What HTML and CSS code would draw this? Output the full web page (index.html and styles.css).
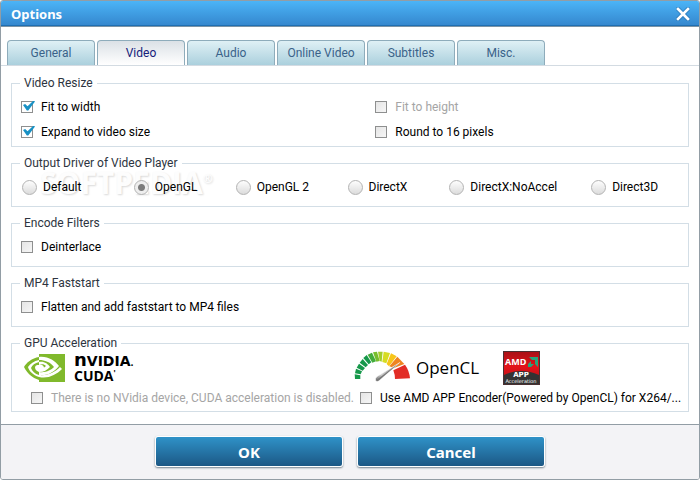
FILE: index.html
```html
<!DOCTYPE html>
<html lang="en">
<head>
<meta charset="utf-8">
<title>Options</title>
<link rel="stylesheet" href="styles.css">
</head>
<body>
<form class="window">
  <header class="titlebar">
    <h1>Options</h1>
    <button type="button" class="close" aria-label="Close">
      <svg width="14" height="14" viewBox="0 0 14 14"><path d="M2 2 12 12M12 2 2 12" stroke="#2469a4" stroke-width="4.6" stroke-linecap="square" opacity=".45"/><path d="M2 2 12 12M12 2 2 12" stroke="#fff" stroke-width="2.6" stroke-linecap="square"/></svg>
    </button>
  </header>
  <nav class="tabs">
    <button type="button" class="tab">General</button>
    <button type="button" class="tab active">Video</button>
    <button type="button" class="tab">Audio</button>
    <button type="button" class="tab">Online Video</button>
    <button type="button" class="tab">Subtitles</button>
    <button type="button" class="tab">Misc.</button>
  </nav>
  <main class="panel">
    <fieldset>
      <legend>Video Resize</legend>
      <div class="resize-grid">
        <label class="check"><input type="checkbox" checked>Fit to width</label>
        <label class="check disabled"><input type="checkbox" disabled>Fit to height</label>
        <label class="check"><input type="checkbox" checked>Expand to video size</label>
        <label class="check"><input type="checkbox">Round to 16 pixels</label>
      </div>
    </fieldset>
    <fieldset class="drivers">
      <legend>Output Driver of Video Player</legend>
      <span class="watermark" aria-hidden="true">SOFTPEDIA<sup>®</sup></span>
      <div class="driver-grid">
        <label class="radio"><input type="radio" name="driver">Default</label>
        <label class="radio"><input type="radio" name="driver" checked>OpenGL</label>
        <label class="radio"><input type="radio" name="driver">OpenGL 2</label>
        <label class="radio"><input type="radio" name="driver">DirectX</label>
        <label class="radio"><input type="radio" name="driver">DirectX:NoAccel</label>
        <label class="radio"><input type="radio" name="driver">Direct3D</label>
      </div>
    </fieldset>
    <fieldset>
      <legend>Encode Filters</legend>
      <div class="single"><label class="check"><input type="checkbox">Deinterlace</label></div>
    </fieldset>
    <fieldset>
      <legend>MP4 Faststart</legend>
      <div class="single"><label class="check"><input type="checkbox">Flatten and add faststart to MP4 files</label></div>
    </fieldset>
    <fieldset>
      <legend>GPU Acceleration</legend>
      <div class="gpu-grid">
        <div class="gpu nvidia">
          <div class="logos">
            <svg width="112" height="32" viewBox="0 0 112 32" role="img" aria-label="NVIDIA CUDA">
              <path d="M15 3H41V31H15Z" fill="#80b92c"/>
              <path d="M15 6C8 7 2 12 0 16C3 22 8 27 15 29V26C9 24 5 20 4 16C6 13 10 10 15 9Z" fill="#80b92c"/>
              <path d="M15 11C11 12 8 14 7 17C8 20 11 23 15 24V21C12 20 11 18 11 16C12 14 13 14 15 14Z" fill="#80b92c"/>
              <path d="M15 6C24 5 31 10 35 15C30 21 24 25 15 24V21C22 22 27 19 30 16C26 11 21 9 15 9Z" fill="#fff"/>
              <path d="M15 11C20 10 24 13 26 16C23 19 20 21 15 21L15 18C18 18 20 17 22 15C20 13 18 13 15 14Z" fill="#fff"/>
              <path d="M15 26C24 28 32 24 38 18L36 16C31 21 24 25 15 24Z" fill="#fff"/>
              <path d="M15 14C18 13 20 15 20 17C18 19 17 19 15 18Z" fill="#fff"/>
              <text class="nv" x="50" y="15"><tspan class="nv-n">n</tspan>VIDIA<tspan class="tiny">.</tspan></text>
              <text class="cuda" x="50" y="30">CUDA<tspan class="tiny" dy="-5">'</tspan></text>
            </svg>
          </div>
          <label class="check disabled"><input type="checkbox" disabled>There is no NVidia device, CUDA acceleration is disabled.</label>
        </div>
        <div class="gpu amd">
          <div class="logos">
            <svg width="57" height="32" viewBox="12 53 171 96" aria-hidden="true">
              <defs>
                <linearGradient id="needle" x1="0" y1="1" x2="1" y2="0"><stop offset="0" stop-color="#666"/><stop offset=".3" stop-color="#ccc"/><stop offset="1" stop-color="#888"/></linearGradient>
              </defs>
              <g fill="#16984a">
                <path d="M15 137 14 123 31 126 31 137Z"/><path d="M15 120 18 106 36 114 32 123Z"/>
                <path d="M20 103 27 91 45 104 38 112Z"/><path d="M29 88 38 77 54 95 47 102Z"/>
                <path d="M40 74 50 65 64 87 56 93Z"/>
              </g>
              <path d="M53 64 66 58 78 84 67 88Z" fill="#43ac3b"/>
              <path d="M69 57 81 55 89 83 79 85Z" fill="#78be2d"/>
              <path d="M84 55 98 55 95 85 89 83Z" fill="#a3cc2c"/>
              <path d="M101 55 120 59 109 90 97 86Z" fill="#d6dc23"/>
              <path d="M123 60 140 69 117 99 110 92Z" fill="#f7c519"/>
              <path d="M142 70 163 92 132 104 118 99Z" fill="#ef8421"/>
              <path d="M165 94Q178 112 180 135L135 137Q135 124 130 111Z" fill="#e22d26"/>
              <path d="M149 88 90 140Q81 148 76 141 75 134 82 129Z" fill="url(#needle)" stroke="#fff" stroke-width="2"/>
              <path d="M148 89 88 140Q82 145 78 141Z" fill="#777"/>
            </svg>
            <span class="opencl">OpenCL</span>
            <svg width="37" height="34" viewBox="0 0 37 34" role="img" aria-label="AMD APP Acceleration">
              <defs><linearGradient id="red" x1="0" y1="0" x2="0" y2="1"><stop offset="0" stop-color="#a91116"/><stop offset=".45" stop-color="#e3131a"/><stop offset="1" stop-color="#b30f14"/></linearGradient></defs>
              <rect width="37" height="34" fill="#4a3032"/>
              <rect x="1" y="1" width="35" height="32" fill="url(#red)"/>
              <path d="M1 33V24Q18 16 36 24V33Z" fill="#333"/>
              <text class="amd-name" x="2" y="14">AMD</text>
              <path d="M26 6H35V16L32 13V9H29ZM28 10V13H31L28 16H25V13Z" fill="#24a77c"/>
              <text class="amd-app" x="18" y="26" text-anchor="middle">APP</text>
              <text class="amd-acc" x="18" y="32" text-anchor="middle">Acceleration</text>
            </svg>
          </div>
          <label class="check"><input type="checkbox">Use AMD APP Encoder(Powered by OpenCL) for X264/...</label>
        </div>
      </div>
    </fieldset>
  </main>
  <footer class="actions">
    <button type="button" class="action">OK</button>
    <button type="button" class="action">Cancel</button>
  </footer>
</form>
</body>
</html>
```
FILE: styles.css
```css
* { box-sizing: border-box; }
body {
  margin: 0;
  background: #fff;
  color: #000;
  font: 12px/16px Roboto, "Open Sans", sans-serif;
}
button, input { font: inherit; margin: 0; }
.window {
  display: flex;
  flex-direction: column;
  min-height: 100vh;
  border: 1px solid #929da5;
  border-radius: 3px;
  overflow: hidden;
}
.titlebar {
  display: flex;
  align-items: center;
  justify-content: space-between;
  height: 26px;
  padding: 0 9px 0 10px;
  background: linear-gradient(#4bb4f7, #3486cd);
  border-bottom: 1px solid #7c94a6;
  box-shadow: inset 0 -1px #1f6fb2;
}
.titlebar h1 {
  margin: 0;
  color: #fff;
  font: bold 13px/24px "Noto Sans", sans-serif;
}
.close {
  display: flex;
  padding: 0;
  border: 0;
  background: none;
}
.tabs {
  display: flex;
  gap: 2px;
  padding: 13px 6px 0;
  border-bottom: 1px solid #d3dbe2;
}
.tab {
  width: 88px;
  height: 25px;
  padding: 0;
  border: 1px solid #8eacbb;
  border-bottom: 0;
  border-radius: 4px 4px 0 0;
  background: linear-gradient(#dff0f5, #abd0dd);
  color: #3a6289;
}
.tab.active {
  background: linear-gradient(#dbe1e6, #fff);
  color: #15207a;
}
.panel {
  display: flex;
  flex: 1;
  flex-direction: column;
  gap: 8px;
  padding: 9px 10px 12px;
}
fieldset {
  min-width: 0;
  margin: 0;
  padding: 0 9px;
  border: 1px solid #d3dee6;
}
legend {
  margin-left: -1px;
  padding: 0 4px;
  color: #2d3440;
}
.check, .radio {
  display: flex;
  align-items: center;
  white-space: nowrap;
}
.check { gap: 8px; height: 25px; }
.radio { gap: 6px; height: 16px; }
.disabled { color: #a5a5a5; }
.check input {
  appearance: none;
  flex: none;
  width: 12px;
  height: 12px;
  border: 1px solid #8e8f8f;
  background: linear-gradient(135deg, #e5e5e5, #f6f6f6);
  position: relative;
}
.check input:checked { background: #fff; }
.check input:checked::after {
  content: "";
  position: absolute;
  left: 1px;
  top: -1px;
  width: 12px;
  height: 10px;
  background: #1991c4;
  clip-path: polygon(0 45%, 18% 34%, 38% 58%, 88% 0, 100% 10%, 44% 100%, 32% 100%);
}
.radio input {
  appearance: none;
  flex: none;
  width: 15px;
  height: 15px;
  border: 1px solid #b3b3b3;
  border-radius: 50%;
  background: linear-gradient(#fdfdfd, #dcdcdc);
}
.radio input:checked {
  background: radial-gradient(circle, #7c7c7c 3px, #eee 4px);
}
.resize-grid {
  display: grid;
  grid-template-columns: 7fr 6fr;
  padding: 3px 0 2px;
}
.drivers { position: relative; }
.driver-grid {
  display: grid;
  position: relative;
  grid-template-columns: 112fr 102fr 112fr 102fr 142fr 88fr;
  padding: 8px 0 11px 1px;
}
.watermark {
  position: absolute;
  left: 28px;
  top: -6px;
  color: #fdfdfd;
  font: bold 30px/36px "Open Sans", sans-serif;
  text-shadow: 1px 1px 2px #d9d9d9;
}
.watermark sup { font-size: 12px; line-height: 0; }
.single { padding: 3px 0 7px; }
.gpu-grid {
  display: grid;
  grid-template-columns: 1fr 1fr;
  height: 60px;
}
.gpu { min-width: 0; }
.logos { display: flex; height: 34px; }
.nvidia .logos { padding-left: 3px; }
.nvidia .check { padding-left: 10px; }
.amd .logos { padding-left: 4px; }
.amd .check { padding-left: 10px; }
.opencl {
  margin: 0 24px 0 5px;
  font: 500 17px/34px "Open Sans", sans-serif;
}
.nv { font: bold 14px "DejaVu Sans", sans-serif; }
.nv-n { font-size: 18px; }
.cuda { font: bold 14px "Open Sans", sans-serif; }
.tiny { font-size: 8px; }
.amd-name { font: bold 9px "Open Sans", sans-serif; fill: #fff; }
.amd-app { font: bold 7px "DejaVu Sans", sans-serif; fill: #fff; }
.amd-acc { font: 5px "DejaVu Sans", sans-serif; fill: #fff; }
.actions {
  display: flex;
  justify-content: center;
  gap: 14px;
  padding: 11px 0 12px;
  border-top: 1px solid #929da5;
  background: #f3f3f6;
}
.action {
  width: 188px;
  height: 31px;
  padding: 0;
  border: 1px solid #fff;
  border-radius: 3px;
  background: linear-gradient(#2f92c8, #1c5885);
  box-shadow: 0 1px 2px #71808c;
  color: #fff;
  font: bold 15px/20px "Noto Sans", sans-serif;
}
```
